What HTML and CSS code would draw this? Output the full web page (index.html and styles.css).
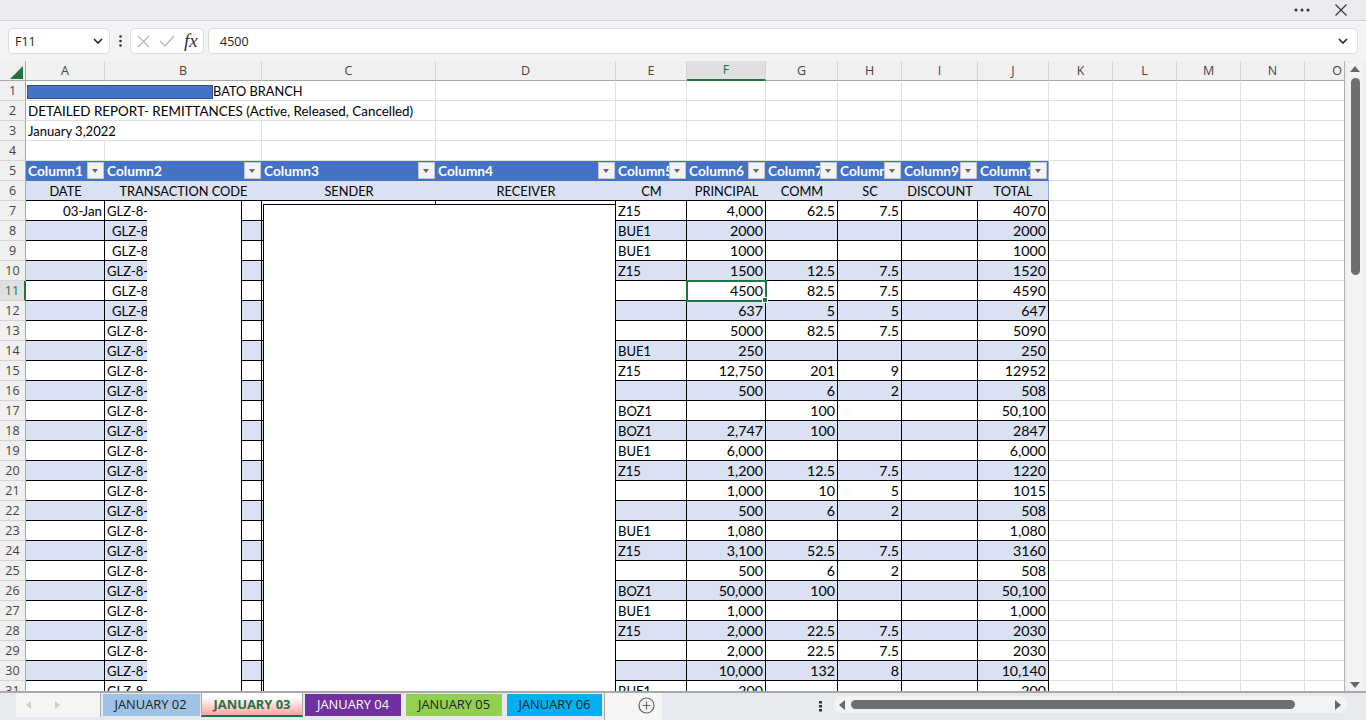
FILE: index.html
```html
<!DOCTYPE html>
<html lang="en">
<head>
<meta charset="utf-8">
<title>Workbook</title>
<link rel="stylesheet" href="styles.css">
</head>
<body>
<div class="app">
  <header class="titlebar">
    <svg class="ico-dots" width="16" height="4" viewBox="0 0 16 4"><circle cx="2" cy="2" r="1.5"/><circle cx="8" cy="2" r="1.5"/><circle cx="14" cy="2" r="1.5"/></svg>
    <svg class="ico-close" width="12" height="12" viewBox="0 0 12 12"><path d="M.5.5l11 11M11.500.5l-11 11"/></svg>
  </header>
  <section class="formulabar">
    <div class="namebox"><span>F11</span><svg class="chev" width="10" height="6" viewBox="0 0 10 6"><path d="M1 1l4 4 4-4"/></svg></div>
    <svg class="vdots" width="3" height="12" viewBox="0 0 3 12"><circle cx="1.500" cy="1.500" r="1.300"/><circle cx="1.500" cy="6" r="1.300"/><circle cx="1.500" cy="10.500" r="1.300"/></svg>
    <div class="fxbox">
      <svg class="fx-x" width="13" height="13" viewBox="0 0 13 13"><path d="M1 1l11 11M12 1L1 12"/></svg>
      <svg class="fx-c" width="16" height="12" viewBox="0 0 16 12"><path d="M1 6l5 5L15 1"/></svg>
      <span class="fx">fx</span>
    </div>
    <div class="fxinput"><span>4500</span><svg class="chev" width="10" height="6" viewBox="0 0 10 6"><path d="M1 1l4 4 4-4"/></svg></div>
  </section>
  <main class="workarea">
    <div class="sheet">
      <table class="grid">
        <colgroup>
          <col class="c0"><col class="ca"><col class="cb"><col class="cc"><col class="cd"><col class="ce"><col class="cf"><col class="cg"><col class="ch"><col class="ci"><col class="cj"><col class="ck"><col class="ck"><col class="ck"><col class="ck"><col class="co">
        </colgroup>
        <thead>
          <tr><th class="corner"><svg width="13" height="13" viewBox="0 0 13 13"><polygon points="13,0 13,13 0,13"/></svg></th><th>A</th><th>B</th><th>C</th><th>D</th><th>E</th><th class="on">F</th><th>G</th><th>H</th><th>I</th><th>J</th><th>K</th><th>L</th><th>M</th><th>N</th><th class="lastcol">O</th></tr>
        </thead>
        <tbody>
          <tr class="p"><th>1</th><td colspan="3" class="afterbar">BATO BRANCH</td><td></td><td></td><td></td><td></td><td></td><td></td><td></td><td></td><td></td><td></td><td></td><td></td></tr>
          <tr class="p"><th>2</th><td colspan="3" class="long">DETAILED REPORT- REMITTANCES (Active, Released, Cancelled)</td><td></td><td></td><td></td><td></td><td></td><td></td><td></td><td></td><td></td><td></td><td></td><td></td></tr>
          <tr class="p"><th>3</th><td colspan="2">January 3,2022</td><td></td><td></td><td></td><td></td><td></td><td></td><td></td><td></td><td></td><td></td><td></td><td></td><td></td></tr>
          <tr class="p"><th>4</th><td></td><td></td><td></td><td></td><td></td><td></td><td></td><td></td><td></td><td></td><td></td><td></td><td></td><td></td><td></td></tr>
          <tr class="tblhead"><th>5</th>
            <td>Column1<i class="flt"></i></td><td>Column2<i class="flt"></i></td><td>Column3<i class="flt"></i></td><td>Column4<i class="flt"></i></td><td>Column5<i class="flt"></i></td><td>Column6<i class="flt"></i></td><td>Column7<i class="flt"></i></td><td>Column8<i class="flt"></i></td><td>Column9<i class="flt"></i></td><td>Column10<i class="flt"></i></td>
            <td></td><td></td><td></td><td></td><td></td></tr>
          <tr class="tblsub"><th>6</th><td>DATE</td><td>TRANSACTION CODE</td><td>SENDER</td><td>RECEIVER</td><td>CM</td><td>PRINCIPAL</td><td>COMM</td><td>SC</td><td>DISCOUNT</td><td>TOTAL</td><td></td><td></td><td></td><td></td><td></td></tr>
          <tr class="d"><th>7</th><td>03-Jan</td><td>GLZ-8-</td><td></td><td></td><td>Z15</td><td>4,000</td><td>62.5</td><td>7.5</td><td></td><td>4070</td><td></td><td></td><td></td><td></td><td></td></tr>
          <tr class="d b"><th>8</th><td></td><td class="ind">GLZ-8</td><td></td><td></td><td>BUE1</td><td>2000</td><td></td><td></td><td></td><td>2000</td><td></td><td></td><td></td><td></td><td></td></tr>
          <tr class="d"><th>9</th><td></td><td class="ind">GLZ-8</td><td></td><td></td><td>BUE1</td><td>1000</td><td></td><td></td><td></td><td>1000</td><td></td><td></td><td></td><td></td><td></td></tr>
          <tr class="d b"><th>10</th><td></td><td>GLZ-8-</td><td></td><td></td><td>Z15</td><td>1500</td><td>12.5</td><td>7.5</td><td></td><td>1520</td><td></td><td></td><td></td><td></td><td></td></tr>
          <tr class="d"><th class="on">11</th><td></td><td class="ind">GLZ-8</td><td></td><td></td><td></td><td class="sel">4500<i class="handle"></i></td><td>82.5</td><td>7.5</td><td></td><td>4590</td><td></td><td></td><td></td><td></td><td></td></tr>
          <tr class="d b"><th>12</th><td></td><td class="ind">GLZ-8</td><td></td><td></td><td></td><td>637</td><td>5</td><td>5</td><td></td><td>647</td><td></td><td></td><td></td><td></td><td></td></tr>
          <tr class="d"><th>13</th><td></td><td>GLZ-8-</td><td></td><td></td><td></td><td>5000</td><td>82.5</td><td>7.5</td><td></td><td>5090</td><td></td><td></td><td></td><td></td><td></td></tr>
          <tr class="d b"><th>14</th><td></td><td>GLZ-8-</td><td></td><td></td><td>BUE1</td><td>250</td><td></td><td></td><td></td><td>250</td><td></td><td></td><td></td><td></td><td></td></tr>
          <tr class="d"><th>15</th><td></td><td>GLZ-8-</td><td></td><td></td><td>Z15</td><td>12,750</td><td>201</td><td>9</td><td></td><td>12952</td><td></td><td></td><td></td><td></td><td></td></tr>
          <tr class="d b"><th>16</th><td></td><td>GLZ-8-</td><td></td><td></td><td></td><td>500</td><td>6</td><td>2</td><td></td><td>508</td><td></td><td></td><td></td><td></td><td></td></tr>
          <tr class="d"><th>17</th><td></td><td>GLZ-8-</td><td></td><td></td><td>BOZ1</td><td></td><td>100</td><td></td><td></td><td>50,100</td><td></td><td></td><td></td><td></td><td></td></tr>
          <tr class="d b"><th>18</th><td></td><td>GLZ-8-</td><td></td><td></td><td>BOZ1</td><td>2,747</td><td>100</td><td></td><td></td><td>2847</td><td></td><td></td><td></td><td></td><td></td></tr>
          <tr class="d"><th>19</th><td></td><td>GLZ-8-</td><td></td><td></td><td>BUE1</td><td>6,000</td><td></td><td></td><td></td><td>6,000</td><td></td><td></td><td></td><td></td><td></td></tr>
          <tr class="d b"><th>20</th><td></td><td>GLZ-8-</td><td></td><td></td><td>Z15</td><td>1,200</td><td>12.5</td><td>7.5</td><td></td><td>1220</td><td></td><td></td><td></td><td></td><td></td></tr>
          <tr class="d"><th>21</th><td></td><td>GLZ-8-</td><td></td><td></td><td></td><td>1,000</td><td>10</td><td>5</td><td></td><td>1015</td><td></td><td></td><td></td><td></td><td></td></tr>
          <tr class="d b"><th>22</th><td></td><td>GLZ-8-</td><td></td><td></td><td></td><td>500</td><td>6</td><td>2</td><td></td><td>508</td><td></td><td></td><td></td><td></td><td></td></tr>
          <tr class="d"><th>23</th><td></td><td>GLZ-8-</td><td></td><td></td><td>BUE1</td><td>1,080</td><td></td><td></td><td></td><td>1,080</td><td></td><td></td><td></td><td></td><td></td></tr>
          <tr class="d b"><th>24</th><td></td><td>GLZ-8-</td><td></td><td></td><td>Z15</td><td>3,100</td><td>52.5</td><td>7.5</td><td></td><td>3160</td><td></td><td></td><td></td><td></td><td></td></tr>
          <tr class="d"><th>25</th><td></td><td>GLZ-8-</td><td></td><td></td><td></td><td>500</td><td>6</td><td>2</td><td></td><td>508</td><td></td><td></td><td></td><td></td><td></td></tr>
          <tr class="d b"><th>26</th><td></td><td>GLZ-8-</td><td></td><td></td><td>BOZ1</td><td>50,000</td><td>100</td><td></td><td></td><td>50,100</td><td></td><td></td><td></td><td></td><td></td></tr>
          <tr class="d"><th>27</th><td></td><td>GLZ-8-</td><td></td><td></td><td>BUE1</td><td>1,000</td><td></td><td></td><td></td><td>1,000</td><td></td><td></td><td></td><td></td><td></td></tr>
          <tr class="d b"><th>28</th><td></td><td>GLZ-8-</td><td></td><td></td><td>Z15</td><td>2,000</td><td>22.5</td><td>7.5</td><td></td><td>2030</td><td></td><td></td><td></td><td></td><td></td></tr>
          <tr class="d"><th>29</th><td></td><td>GLZ-8-</td><td></td><td></td><td></td><td>2,000</td><td>22.5</td><td>7.5</td><td></td><td>2030</td><td></td><td></td><td></td><td></td><td></td></tr>
          <tr class="d b"><th>30</th><td></td><td>GLZ-8-</td><td></td><td></td><td></td><td>10,000</td><td>132</td><td>8</td><td></td><td>10,140</td><td></td><td></td><td></td><td></td><td></td></tr>
          <tr class="d"><th>31</th><td></td><td>GLZ-8-</td><td></td><td></td><td>BUE1</td><td>200</td><td></td><td></td><td></td><td>200</td><td></td><td></td><td></td><td></td><td></td></tr>
        </tbody>
      </table>
      <div class="bar-mask"></div>
      <div class="mask-b"></div>
      <div class="mask-c"></div>
    </div>
    <aside class="vscroll">
      <i class="arr up"></i>
      <div class="vtrack"><div class="vthumb"></div></div>
      <i class="arr down"></i>
    </aside>
  </main>
  <footer class="tabbar">
    <div class="nav">
      <i class="tri left"></i>
      <i class="tri right"></i>
    </div>
    <div class="tabs">
      <div class="tab t2">JANUARY 02</div>
      <div class="tab active">JANUARY 03</div>
      <div class="tab t4">JANUARY 04</div>
      <div class="tab t5">JANUARY 05</div>
      <div class="tab t6">JANUARY 06</div>
    </div>
    <div class="addwrap">
      <svg width="17" height="17" viewBox="0 0 17 17"><circle cx="8.500" cy="8.500" r="7.500"/><path d="M8.500 4.500v8M4.500 8.500h8"/></svg>
    </div>
    <svg class="tabdots" width="3" height="11" viewBox="0 0 3 11"><rect width="3" height="2.500" y="0"/><rect width="3" height="2.500" y="4"/><rect width="3" height="2.500" y="8"/></svg>
    <div class="hscroll">
      <i class="hl"></i>
      <div class="htrack"><div class="hthumb"></div></div>
      <i class="hr"></i>
    </div>
  </footer>
</div>
</body>
</html>
```

FILE: styles.css
```css
* { box-sizing: border-box; }
html, body { margin: 0; padding: 0; height: 100%; overflow: hidden; }
body { font-family: "Open Sans", "Noto Sans", sans-serif; color: #222; background: #e6eaee; }
.app { width: 1366px; height: 720px; display: flex; flex-direction: column; overflow: hidden; }

/* title bar */
.titlebar { height: 21px; flex: none; background: #e9ebef; border-bottom: 1px solid #d2d4d6; display: flex; align-items: center; justify-content: flex-end; padding-right: 19px; gap: 25px; }
.ico-dots { fill: #333; }
.ico-close { fill: none; stroke: #333; stroke-width: 1.100; }

/* formula bar */
.formulabar { height: 40px; flex: none; background: #f3f3f3; display: flex; align-items: flex-start; padding: 7px 8px 0; }
.namebox, .fxbox, .fxinput { height: 26px; background: #fff; border: 1px solid #dcdcdc; border-radius: 5px; display: flex; align-items: center; font-size: 12.500px; color: #222; }
.namebox { width: 102px; padding: 0 6px; justify-content: space-between; }
.chev { fill: none; stroke: #222; stroke-width: 1.600; }
.vdots { fill: #333; margin: 7px 9px 0 9px; flex: none; }
.fxbox { width: 74px; padding-left: 6px; margin-left: -1px; }
.fx-x { fill: none; stroke: #b8b8b8; stroke-width: 1.300; }
.fx-c { fill: none; stroke: #b8b8b8; stroke-width: 1.300; margin-left: 9px; }
.fx { font-family: "Liberation Serif", serif; font-style: italic; font-size: 19px; color: #333; margin-left: 9px; line-height: 20px; }
.fxinput { width: 1150px; margin-left: 4px; padding: 0 9px 0 11px; justify-content: space-between; }

/* sheet */
.workarea { flex: none; height: 630px; display: flex; background: #f0f1f3; }
.sheet { position: relative; width: 1345px; height: 630px; overflow: hidden; background: #fff; border-right: 1px solid #b0b0b0; }
.grid { border-collapse: separate; border-spacing: 0; table-layout: fixed; width: 1345px; font-family: Lato, "Liberation Sans", sans-serif; font-size: 13px; color: #000; }
.c0 { width: 26px; } .ca { width: 79px; } .cb { width: 157px; } .cc { width: 174px; } .cd { width: 180px; }
.ce { width: 71px; } .cf { width: 79px; } .cg { width: 72px; } .ch { width: 64px; } .ci { width: 76px; } .cj { width: 71px; }
.ck { width: 64px; } .co { width: 40px; }
.grid tr { height: 20px; }
.grid th { padding: 0; height: 20px; font-weight: 400; font-family: "Open Sans", "Noto Sans", sans-serif; font-size: 12.500px; color: #444; background: #f0f0f0; border-right: 1px solid #d4d4d4; border-bottom: 1px solid #d4d4d4; overflow: hidden; line-height: 18px; }
.grid thead th { border-bottom: 1px solid #a8a8a8; }
.grid tbody th { border-right: 1px solid #a8a8a8; }
.grid thead th.lastcol { text-align: right; padding-right: 3px; border-right: 0; }
.grid th.corner { padding: 0; text-align: left; border-right: 1px solid #a8a8a8; }
.corner svg { display: block; margin: 3px 0 0 10px; fill: #217346; }
.grid thead th.on { background: #e0e0e0; color: #217346; border-bottom: 2px solid #217346; }
.grid tbody th.on { background: #e0e0e0; color: #217346; border-right: 2px solid #217346; }
.grid td { padding: 1px 2px 0; height: 20px; line-height: 18px; white-space: nowrap; overflow: hidden; border-right: 1px solid #e0e0e0; border-bottom: 1px solid #e0e0e0; position: relative; }
.afterbar { padding-left: 187px !important; font-size: 12.800px; }
.long { font-size: 13.400px; }

/* table body */
.tblhead td { background: #4472c4; color: #fff; font-weight: 700; font-size: 13.700px; border-right: 0; border-bottom: 1px solid #4472c4; }
.tblhead td:nth-child(n+12), .tblsub td:nth-child(n+12) { background: #fff; font-weight: 400; border-right: 1px solid #e0e0e0; border-bottom: 1px solid #e0e0e0; }
.tblhead td:nth-child(11) { border-right: 1px solid #8ea9db; }
.tblsub td { background: #d9e1f2; text-align: center; font-size: 12.800px; border-right: 0; border-bottom: 1px solid #000; }
.tblsub td:nth-child(11) { border-right: 1px solid #8ea9db; }
.d td { border-right: 1px solid #000; border-bottom: 1px solid #000; }
.d td:nth-child(2), .d td:nth-child(n+7) { text-align: right; }
.d td:nth-child(2) { font-size: 13.300px; }
.d td:nth-child(n+7) { font-size: 14.200px; }
.d td:nth-child(3) { padding-right: 0; }
.d td:nth-child(n+12) { border-right: 1px solid #e0e0e0; border-bottom: 1px solid #e0e0e0; }
.b td { background: #d9e1f2; }
.b td:nth-child(n+12) { background: #fff; }
.d td.ind { padding-left: 7px; }
.flt { position: absolute; right: 1px; top: 1px; width: 17px; height: 17px; background: #f3f3f3; border: 1px solid #c6c6c6; }
.flt::after { content: ""; position: absolute; left: 4px; top: 6px; border-left: 3.500px solid transparent; border-right: 3.500px solid transparent; border-top: 4px solid #666; }
.sel { outline: 2px solid #217346; outline-offset: -1px; overflow: visible !important; z-index: 2; }
.handle { position: absolute; right: -3px; bottom: -3px; width: 6px; height: 6px; background: #217346; border: 1px solid #fff; }

/* overlays */
.bar-mask { position: absolute; left: 27px; top: 24px; width: 186px; height: 14px; background: #4472c4; border: 1px solid #2f528f; }
.mask-b { position: absolute; left: 147px; top: 140px; width: 95px; bottom: 0; background: #fff; border-right: 1px solid #000; }
.mask-c { position: absolute; left: 263px; top: 143px; width: 353px; bottom: 0; background: #fff; border-left: 1px solid #000; border-top: 1px solid #000; border-right: 1px solid #000; }

/* vertical scrollbar */
.vscroll { width: 21px; height: 632px; padding: 0 2px; display: flex; flex-direction: column; align-items: center; background: #eceef1; }
.arr { flex: none; height: 17px; width: 17px; position: relative; }
.arr::after { content: ""; position: absolute; left: 3px; border-left: 5px solid transparent; border-right: 5px solid transparent; }
.arr.up::after { top: 5px; border-bottom: 6px solid #666; }
.arr.down::after { top: 6px; border-top: 6px solid #666; }
.vtrack { flex: 1; width: 17px; background: #f3f3f3; display: flex; justify-content: center; }
.arr.up { background: #f3f3f3; border-radius: 8px 8px 0 0; }
.arr.down { background: #f3f3f3; border-radius: 0 0 8px 8px; }
.vthumb { width: 9px; height: 197px; background: #6e6e6e; border-radius: 5px; }

/* sheet tabs */
.tabbar { flex: none; height: 29px; position: relative; display: flex; align-items: stretch; background: #e6eaee; border-top: 2px solid #a9a9a9; }
.nav { width: 101px; padding-left: 16px; background: linear-gradient(to right, #f5f5f5, #f5f5f5); background-origin: content-box; background-clip: content-box; display: flex; align-items: center; border-right: 1px solid #a9a9a9; height: 24px; }
.tri { width: 0; height: 0; border-top: 4px solid transparent; border-bottom: 4px solid transparent; }
.tri.left { border-right: 5px solid #ccc; margin-left: 10px; }
.tri.right { border-left: 5px solid #ccc; margin-left: 24px; }
.tabs { display: flex; height: 27px; padding-top: 1px; }
.tab { height: 22px; margin-left: 2px; width: 97px; font-size: 12.900px; line-height: 21px; text-align: center; color: #222; }
.t2 { background: #9dc3e6; text-indent: -2px; }
.t4 { background: #7030a0; color: #fff; width: 96px; margin-left: 2px; }
.t5 { background: #92d050; width: 96px; margin-left: 5px; }
.t6 { background: #00b0f0; width: 95px; margin-left: 5px; }
.active { width: 102px; margin-left: 1px; margin-top: -1px; height: 24px; padding-top: 1px; font-weight: 700; color: #217346; background: linear-gradient(to bottom, #fff 0%, #fff 20%, #ffa3a3 100%); border-left: 1px solid #a9a9a9; border-right: 1px solid #a9a9a9; border-bottom: 2px solid #217346; }
.addwrap { width: 58px; background: #f5f5f5; display: flex; align-items: center; justify-content: center; margin-left: 2px; border-left: 1px solid #a9a9a9; padding-left: 26px; height: 27px; padding-bottom: 2px; }
.addwrap svg { fill: none; stroke: #666; stroke-width: 1.200; }
.tabdots { fill: #333; margin: 8px 0 0 157px; }
.hscroll { position: absolute; left: 834px; top: 3px; width: 513px; height: 17px; background: #f3f3f3; border-radius: 8px; display: flex; align-items: center; padding: 0 6px 0 5px; }
.hl { width: 0; height: 0; border-top: 5px solid transparent; border-bottom: 5px solid transparent; border-right: 6px solid #666; }
.hr { width: 0; height: 0; border-top: 5px solid transparent; border-bottom: 5px solid transparent; border-left: 6px solid #666; }
.htrack { flex: 1; height: 9px; margin-left: 6px; }
.hthumb { width: 444px; height: 9px; background: #6e6e6e; border-radius: 5px; }
```
